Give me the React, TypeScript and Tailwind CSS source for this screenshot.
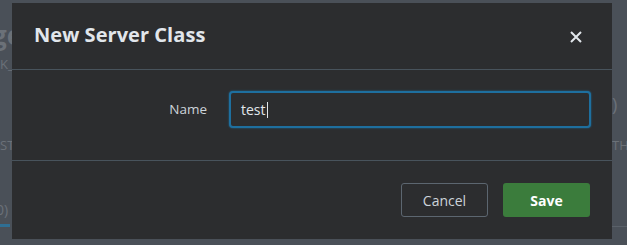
import React from "react";

export default function App() {
  return (
    <div
      className="relative w-[627px] h-[245px] overflow-hidden bg-[#4a5058]"
      style={{ fontFamily: "'Open Sans', Lato, sans-serif" }}
    >
      {/* ghost background page content */}
      <div className="absolute left-[-8px] top-[16px] text-[26px] font-bold text-[#6b7178]">ge</div>
      <div className="absolute left-0 top-[55px] text-[13px] text-[#6b7178]">K_</div>
      <div className="absolute left-0 top-[136px] text-[13px] text-[#6b7178]">ST</div>
      <div className="absolute left-[-4px] top-[199px] text-[14px] text-[#6b7178]">0)</div>
      <div className="absolute left-0 top-[224px] w-[10px] h-[3px] bg-[#2f6f94]" />
      <div className="absolute left-[612px] top-[91px] text-[18px] text-[#6b7178]">)</div>
      <div className="absolute left-[612px] top-[136px] text-[13px] text-[#6b7178]">TH</div>
      <div className="absolute left-[612px] top-[226px] w-[20px] h-px bg-[#5a6169]" />

      {/* modal */}
      <div className="absolute left-[12px] top-[3px] w-[600px] h-[236px] bg-[#2c2d2f] flex flex-col">
        <div className="h-[67px] flex items-center justify-between pl-[22px] pr-[30px] border-b border-[#48535c]">
          <div className="text-[20px] font-bold text-[#e1e6eb] tracking-[0.05px] -mt-[2px]">New Server Class</div>
          <svg width="12" height="12" viewBox="0 0 12 12" className="mt-[2px]">
            <path d="M1 1 L11 11 M11 1 L1 11" stroke="#e1e6eb" strokeWidth="2" />
          </svg>
        </div>
        <div className="h-[91px] flex items-start pt-[21px] border-b border-[#48535c]">
          <div className="w-[195px] text-right text-[13.5px] text-[#ccd3da] pt-[8px]">Name</div>
          <div className="ml-[22px] w-[362px] h-[37px] rounded-[4px] border-2 border-[#1e6f9f] shadow-[0_0_2px_#1e6f9f] bg-[#2c2d2f] flex items-center pl-[10px]">
            <span className="text-[14px] text-[#e1e6eb]">test</span>
            <span className="w-px h-[16px] bg-[#e1e6eb] ml-[1px]" />
          </div>
        </div>
        <div className="flex-1 flex items-start justify-end pt-[22px] pr-[22px] gap-[15px]">
          <button className="w-[87px] h-[34px] rounded-[3px] border border-[#5c6670] text-[14px] text-[#ccd3da] bg-transparent">
            Cancel
          </button>
          <button className="w-[87px] h-[34px] rounded-[3px] bg-[#3b7c3c] text-[14px] font-bold text-white">
            Save
          </button>
        </div>
      </div>
    </div>
  );
}
